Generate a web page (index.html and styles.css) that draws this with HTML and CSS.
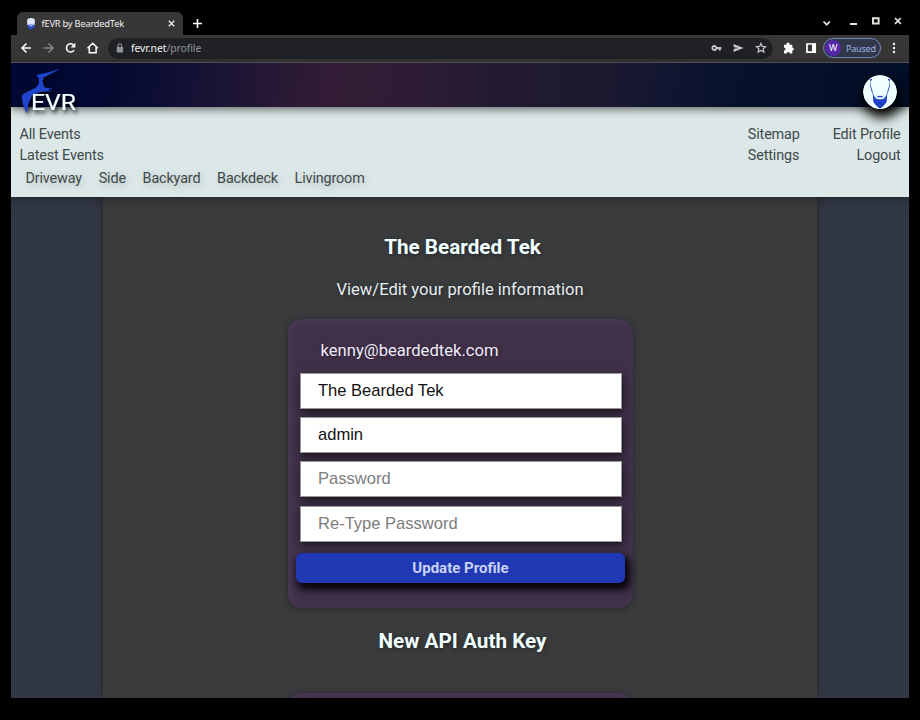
FILE: index.html
```html
<!DOCTYPE html>
<html lang="en">
<head>
<meta charset="utf-8">
<title>fEVR by BeardedTek</title>
<link rel="stylesheet" href="styles.css">
</head>
<body>
<div class="window">
  <div class="tabbar">
    <div class="tab">
      <svg class="favicon" width="10" height="12" viewBox="0 0 10 12"><path d="M1 3Q1 0 5 0T9 3L8.500 7.500Q5 9 1.500 7.500Z" fill="#dfe4ff"/><path d="M1.300 7Q5 6 8.700 7L8 9.700 5 12 2 9.700Z" fill="#2744c4"/><path d="M3.500 7.800h3" stroke="#dfe4ff"/></svg>
      <span class="tab-title">fEVR by BeardedTek</span>
      <svg class="tab-close" width="7" height="7" viewBox="0 0 7 7"><path d="M.8.8l5.400 5.400M6.200.8L.8 6.200" stroke="#eee" stroke-width="1.300"/></svg>
    </div>
    <svg class="newtab" width="9" height="9" viewBox="0 0 9 9"><path d="M4.500 0v9M0 4.500h9" stroke="#fff" stroke-width="1.600"/></svg>
    <svg class="controls" width="82" height="12" viewBox="0 0 82 12" fill="none" stroke="#e4e4de" stroke-width="1.700"><path d="M1.500 6.500l3.200 3.200 3.200-3.200"/><path d="M28 9h7" stroke-width="2"/><path d="M51 3.200h5.600v5.400H51z" stroke-width="2"/><path d="M73 3l5.800 5.800M78.800 3L73 8.800"/></svg>
  </div>
  <div class="toolbar">
    <svg class="navicons" width="78" height="14" viewBox="0 0 78 14" fill="none" stroke="#fff" stroke-width="1.500"><path d="M10 7H1.200M5.500 2.500L1 7l4.500 4.500"/><path stroke="#858585" d="M22.500 7h9M27.500 2.500L32 7l-4.500 4.500"/><path d="M53 9.200A4.100 4.100 0 1 1 52.400 4"/><path d="M54.300 1.800v4.700h-4.700z" fill="#fff" stroke="none"/><path d="M66.500 7.200L71.700 2.200l5.200 5M68.300 6v5.800h2M73.100 11.800h2V6M70.200 11.800h3"/></svg>
    <div class="address">
      <svg width="8" height="10" viewBox="0 0 8 10"><rect x=".7" y="4" width="6.400" height="5.500" rx=".7" fill="#929599"/><path d="M2.100 4V2.600a1.800 1.800 0 0 1 3.600 0V4" fill="none" stroke="#929599" stroke-width="1.100"/></svg>
      <span class="url">fevr.net<span class="path">/profile</span></span>
      <svg class="address-icons" width="56" height="12" viewBox="0 0 56 12"><g fill="none" stroke="#c5c7ca"><circle cx="3.300" cy="6" r="2" stroke-width="1.800"/><path d="M5.300 6h5M8.700 6v2.500" stroke-width="2"/><path d="M50 1.400l1.300 3 3.300.3-2.500 2.200.8 3.200-2.900-1.700-2.900 1.700.8-3.200-2.500-2.200 3.300-.3z" stroke-width="1.200"/></g><path d="M22.500 2l10 4-10 4 .3-3.200 5-.8-5-.8z" fill="#c5c7ca"/></svg>
    </div>
    <svg class="ext" width="34" height="12" viewBox="0 0 34 12"><path fill="#fff" d="M1 2.700H3.500a1.600 1.600 0 1 1 3 0H9.300v2.800a1.500 1.500 0 1 1 0 3v3H6.900a1.600 1.600 0 0 0-3.200 0H1V8.600a1.500 1.500 0 0 0 0-3z"/><path d="M24 2h8.200v8.200H24z" fill="none" stroke="#fff" stroke-width="1.700"/><path d="M29 1.500h4V11h-4z" fill="#fff"/></svg>
    <div class="account"><span class="initial">W</span><span>Paused</span></div>
    <svg class="dots" width="4" height="12" viewBox="0 0 4 12" fill="#f5f5f5"><circle cx="2" cy="2" r="1.200"/><circle cx="2" cy="6" r="1.200"/><circle cx="2" cy="10" r="1.200"/></svg>
  </div>
  <header class="banner">
    <svg class="logo" width="66" height="54" viewBox="0 0 66 54"><path fill="#1f43cb" d="M42 1.300L30 5.200 17 8 19.700 11 20 16.500 17 20.500 11 23.500 4 27 2.700 30 4 38 7.700 46.500 9.500 37 13 28.500 21 25 33.500 24 28 22.800 34 21.800 25.500 20.500 23.500 14 24.800 10.500 33 6.300Z"/><text x="12" y="43" textLength="45" lengthAdjust="spacingAndGlyphs" class="logo-text">EVR</text></svg>
    <svg class="avatar" width="34" height="34" viewBox="0 0 34 34"><circle cx="17" cy="17" r="17" fill="#f0ffff"/><g fill="#2140c8"><path d="M9.800 17.500Q11 22 12.500 22.500 13.500 19 17 19T21.500 22.500Q23 22 24.200 17.500L23.700 27Q20 32 17 33.500 14 32 10.300 27Z"/><path d="M8 5L7.100 11 8.500 16 10.300 21 9.300 15.500 7.900 11ZM26 5l.9 6-1.400 5-1.800 5 1-5.500 1.400-4.500ZM6.800 4h2.400L7.600 7ZM24.800 4h2.400l-.8 3Z"/></g><path d="M12.300 23Q13 18.700 17 18.700T21.700 23Q19.500 24.800 17 24 14.500 24.800 12.300 23Z" fill="#f0ffff"/><path d="M14.300 22.300q2.700-1.800 5.400 0" stroke="#2140c8" fill="none" stroke-width="1.300"/></svg>
  </header>
  <nav class="menu">
    <div class="menu-main">
      <div class="links"><a>All Events</a><a>Latest Events</a></div>
      <div class="links settings"><a>Sitemap</a><a>Settings</a></div>
      <div class="links user"><a>Edit Profile</a><a>Logout</a></div>
    </div>
    <div class="cameras"><a>Driveway</a><a>Side</a><a>Backyard</a><a>Backdeck</a><a>Livingroom</a></div>
  </nav>
  <main class="page">
    <section class="content">
      <h1>The Bearded Tek</h1>
      <p class="intro">View/Edit your profile information</p>
      <form class="card">
        <div class="email">kenny@beardedtek.com</div>
        <input value="The Bearded Tek">
        <input value="admin">
        <input type="password" placeholder="Password">
        <input type="password" placeholder="Re-Type Password">
        <button type="button">Update Profile</button>
      </form>
      <h2>New API Auth Key</h2>
      <div class="card next"></div>
    </section>
  </main>
</div>
</body>
</html>
```
FILE: styles.css
```css
* { box-sizing: border-box; }
body { margin: 0; background: #000; height: 720px; overflow: hidden; font-family: Roboto, sans-serif; }
.window { width: 898px; height: 698px; margin-left: 11px; overflow: hidden; display: flex; flex-direction: column; }
svg { flex: none; display: block; }

.tabbar { height: 35px; flex: none; display: flex; align-items: flex-end; padding-left: 6px; }
.tab { width: 166px; height: 23px; background: #373737; border-radius: 6px 6px 0 0; display: flex; align-items: center; padding: 0 8px 0 9px; font: 9.200px "Noto Sans", sans-serif; color: #f1f1f1; }
.tab-title { margin-left: 5.500px; white-space: nowrap; letter-spacing: -.22px; font-size: 9.300px; }
.tab-close { margin-left: auto; }
.newtab { margin: 0 0 7px 10px; }
.controls { margin: 0 5px 8px auto; }

.toolbar { height: 28px; flex: none; background: #373737; border-bottom: 1px solid #626265; display: flex; align-items: center; padding: 0 0 1px 10px; }
.address { width: 665px; height: 21px; margin-left: 9px; border-radius: 11px; background: #1f2125; display: flex; align-items: center; padding: 0 6px 0 8px; font: 10.400px "Noto Sans", sans-serif; letter-spacing: -.07px; color: #f4f4f4; }
.url { margin-left: 7px; }
.path { color: #929599; }
.address-icons { margin-left: auto; }
.ext { margin-left: 10px; }
.account { width: 58px; height: 20px; margin-left: 6px; border: 1px solid #7189bd; border-radius: 10px; background: #30384a; display: flex; align-items: center; color: #9db4e8; font: 9px "Noto Sans", sans-serif; letter-spacing: -.2px; padding-left: 1px; gap: 5px; }
.initial { width: 16px; height: 16px; border-radius: 50%; background: #5428a8; color: #fff; text-align: center; line-height: 16px; }
.dots { margin-left: 11px; }

.banner { height: 44px; flex: none; position: relative; z-index: 2; display: flex; justify-content: space-between; align-items: flex-start; padding: 0 12px 0 8px; background: linear-gradient(97deg, #000831 0%, #020832 10%, #151234 21%, #321c35 35%, #301c34 42%, #241b33 53%, #1c192f 65%, #151731 71%, #07122b 80%, #020f29 100%); box-shadow: 0 2px 9px rgba(0,0,0,.6); }
.logo { margin-top: 4px; overflow: visible; filter: drop-shadow(2px 3px 2px rgba(0,0,0,.75)); }
.logo-text { font: 22px Roboto, sans-serif; fill: #f0ffff; stroke: #f0ffff; stroke-width: .2px; }
.avatar { margin-top: 12px; border-radius: 50%; box-shadow: 2px 6px 12px 3px rgba(0,0,0,.95); }

.menu { height: 90px; flex: none; background: #dbe8e7; padding: 17px 8.500px 0; color: #41494a; font-size: 14.400px; letter-spacing: -.15px; line-height: 21px; position: relative; z-index: 1; box-shadow: 0 2px 8px rgba(0,0,0,.35); }
.menu-main { display: flex; }
.links { display: flex; flex-direction: column; }
.settings { margin-left: auto; }
.user { margin-left: 33px; text-align: right; }
.cameras { display: flex; gap: 16.700px; padding: 2px 0 0 6px; text-shadow: 2px 2px 9px rgba(0,0,0,.22); }

.page { flex: 1; min-height: 0; background: #313743; display: flex; padding: 0 92px; }
.content { width: 714px; background: #3a3b3d; box-shadow: 0 0 7px rgba(0,0,0,.4); display: flex; flex-direction: column; align-items: center; color: #f0ffff; text-shadow: 1px 1px 4px rgba(0,0,0,.4); }
h1, h2 { font-size: 20.700px; line-height: 24px; font-weight: 700; margin: 0; position: relative; left: 2.500px; }
h1 { margin-top: 38px; }
.intro { margin: 21px 0 0; font-size: 16.600px; line-height: 20px; color: #e5edee; }
.card { width: 345px; height: 289px; flex: none; margin: 19px 0 0 1px; background: #403149; border-radius: 14px; box-shadow: 0 1px 6px rgba(0,0,0,.35), inset 3px 3px 8px rgba(100,75,115,.3); padding: 22px 8px 0 12px; display: flex; flex-direction: column; }
.email { font-size: 16.600px; line-height: 20px; padding-left: 20.500px; color: #f0eafa; margin-bottom: 12px; }
input { width: 322px; height: 36px; flex: none; margin: 0 0 8.200px; padding: 0 17px; border: 1px solid #999; background: #fff; font: 16.550px "Liberation Sans", sans-serif; color: #111; box-shadow: 1px 3px 8px rgba(0,0,0,.6); }
input::placeholder { color: #7c7c7c; }
button { width: 329px; height: 30px; margin: 3px 0 0 -4px; padding: 0; border: 0; border-radius: 6px; background: #2038b4; color: #c9d2f5; font: 700 15px Roboto, sans-serif; box-shadow: 3px 5px 7px 2px #08050c; }
h2 { margin-top: 21px; }
.next { margin-top: 40px; }
```
